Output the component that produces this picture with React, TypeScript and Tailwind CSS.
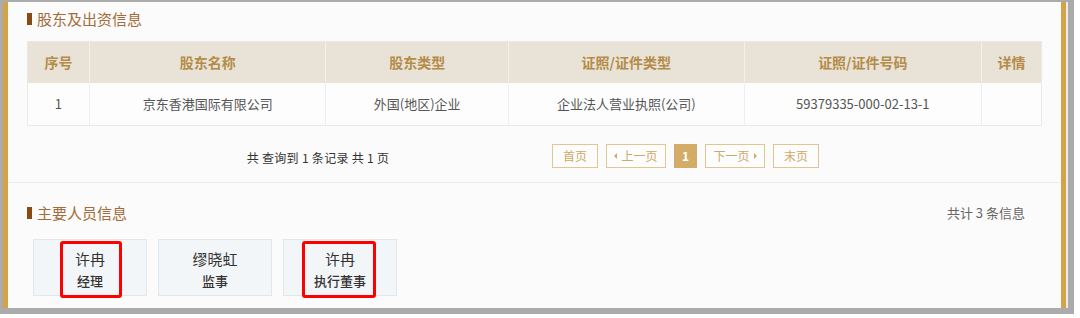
import React from "react";

const font = { fontFamily: '"Noto Sans CJK SC", "Noto Sans", sans-serif' };

function SectionTitle({ text }: { text: string }) {
  return (
    <div className="flex items-center h-[20px]">
      <div className="w-[5px] h-[12px] shrink-0 bg-[#8b4a14]" />
      <span className="ml-[5px] text-[15px] leading-[20px] text-[#a36c3a]">{text}</span>
    </div>
  );
}

const cols = [
  { w: "w-[61px]", h: "序号", d: "1" },
  { w: "w-[237px]", h: "股东名称", d: "京东香港国际有限公司" },
  { w: "w-[183px]", h: "股东类型", d: "外国(地区)企业" },
  { w: "w-[236px]", h: "证照/证件类型", d: "企业法人营业执照(公司)" },
  { w: "w-[238px]", h: "证照/证件号码", d: "59379335-000-02-13-1" },
  { w: "w-[60px]", h: "详情", d: "" },
];

function PageBtn({ children, w }: { children: React.ReactNode; w: string }) {
  return (
    <div
      className={`${w} h-[24px] flex items-center justify-center border border-[#e2c591] text-[12px] text-[#cfa866] bg-[#fdfdfd]`}
    >
      {children}
    </div>
  );
}

function Person({ name, role }: { name: string; role: string }) {
  return (
    <div className="w-[114px] h-[57px] bg-[#f3f6f8] border border-[#e3e7ea] flex flex-col items-center pt-[9px]">
      <div className="text-[15px] leading-[20px] text-[#333]">{name}</div>
      <div className="mt-[3px] text-[13px] leading-[18px] font-medium text-[#333]">{role}</div>
    </div>
  );
}

export default function App() {
  return (
    <div className="w-[1080px] h-[318px] bg-white" style={font}>
      <div className="w-[1074px] h-[314px] bg-[#ababab] pt-[2px] pl-[3px] pr-[6px] pb-[6px]">
        <div className="h-full bg-[#ececec] pr-[2px]">
          <div className="h-full border-x-[5px] border-[#d4a248] bg-[#fbfbfb] flex flex-col">
            <div className="px-[19px] pt-[7px]">
              <SectionTitle text="股东及出资信息" />
              <div className="mt-[12px] border border-[#ece9e4]">
                <div className="flex bg-[#e9e2d7] h-[41px]">
                  {cols.map((c, i) => (
                    <div
                      key={i}
                      className={`${c.w} flex items-center justify-center text-[14px] font-bold text-[#b48c49] ${i > 0 ? "border-l border-[#f3efe9]" : ""}`}
                    >
                      {c.h}
                    </div>
                  ))}
                </div>
                <div className="flex bg-[#fdfdfd] h-[42px]">
                  {cols.map((c, i) => (
                    <div
                      key={i}
                      className={`${c.w} flex items-center justify-center text-[13px] text-[#555] ${i > 0 ? "border-l border-[#efefef]" : ""}`}
                    >
                      {c.d}
                    </div>
                  ))}
                </div>
              </div>
              <div className="mt-[18px] flex items-center h-[24px]">
                <div className="w-[582px] shrink-0 flex justify-center text-[12px] text-[#333] pt-[3px] tracking-[0.3px]">
                  共 查询到 1 条记录 共 1 页
                </div>
                <div className="flex items-center gap-[8px] ml-[-57px]">
                  <PageBtn w="w-[46px]">首页</PageBtn>
                  <PageBtn w="w-[60px]">
                    <span className="w-0 h-0 border-y-[3px] border-y-transparent border-r-[3px] border-r-[#d4ab66] mr-[4px]" />
                    上一页
                  </PageBtn>
                  <div className="w-[23px] h-[24px] bg-[#d3ac67] text-white text-[12px] font-bold flex items-center justify-center">
                    1
                  </div>
                  <PageBtn w="w-[60px]">
                    下一页
                    <span className="w-0 h-0 border-y-[3px] border-y-transparent border-l-[3px] border-l-[#d4ab66] ml-[4px]" />
                  </PageBtn>
                  <PageBtn w="w-[46px]">末页</PageBtn>
                </div>
              </div>
            </div>
            <div className="mt-[14px] h-px bg-[#ececec]" />
            <div className="px-[19px] pt-[20px]">
              <div className="flex items-center justify-between">
                <SectionTitle text="主要人员信息" />
                <span className="mr-[17px] text-[13px] text-[#666]">共计 3 条信息</span>
              </div>
              <div className="mt-[16px] ml-[6px] flex gap-[11px]">
                <div className="relative">
                  <Person name="许冉" role="经理" />
                  <div className="absolute left-[27px] top-[2px] w-[62px] h-[57px] border-[3px] border-[#ff0000] rounded-[3px]" />
                </div>
                <Person name="缪晓虹" role="监事" />
                <div className="relative">
                  <Person name="许冉" role="执行董事" />
                  <div className="absolute left-[19px] top-[2px] w-[74px] h-[57px] border-[3px] border-[#ff0000] rounded-[3px]" />
                </div>
              </div>
            </div>
          </div>
        </div>
      </div>
    </div>
  );
}
